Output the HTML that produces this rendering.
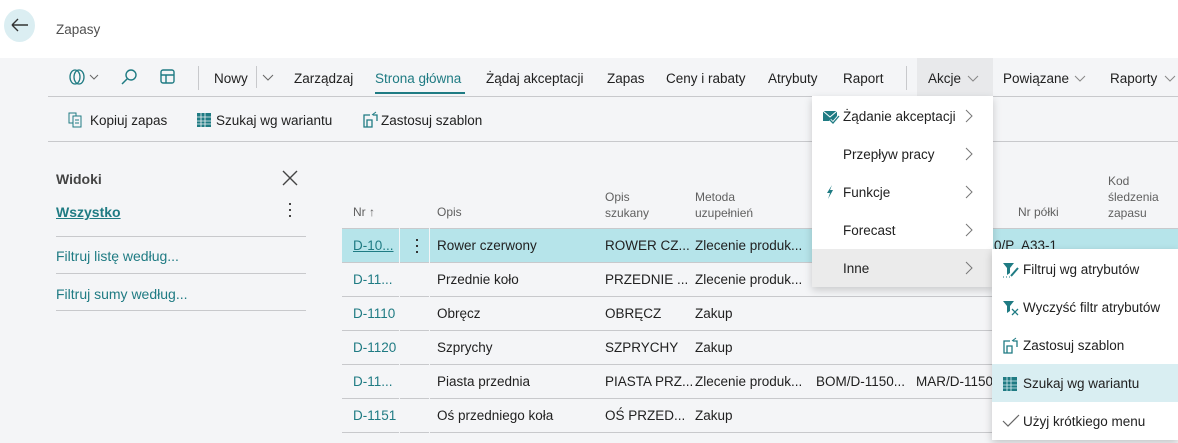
<!DOCTYPE html>
<html><head><meta charset="utf-8"><style>
*{margin:0;padding:0;box-sizing:border-box}
body{width:1178px;height:443px;overflow:hidden;background:#f4f5f7;font-family:"Liberation Sans",sans-serif;font-size:13.5px;color:#212121;position:relative}
.a{position:absolute;white-space:nowrap}
.hl{position:absolute;height:1px;background:#c8c9cc}
.teal{color:#1f7b83}
.g{color:#606060;font-size:12px}
svg{position:absolute}
.t{margin-top:1px}
</style></head><body>
<div class="a" style="left:0;top:0;width:1178px;height:58px;background:#fff"></div>
<div class="a" style="left:4px;top:9px;width:31px;height:33px;border-radius:50%;background:#dbeef2"></div>
<svg style="left:10px;top:17px" width="20" height="16" viewBox="0 0 20 16"><path d="M2 8H18M2 8L8 2M2 8L8 14" stroke="#333" stroke-width="1.4" fill="none"/></svg>
<div class="a" style="left:56px;top:22px;color:#505050">Zapasy</div>

<!-- toolbar -->
<svg style="left:68px;top:68px" width="36" height="18" viewBox="0 0 36 18"><ellipse cx="7" cy="9" rx="5" ry="7" fill="none" stroke="#1f7b83" stroke-width="1.3"/><ellipse cx="11" cy="9" rx="5" ry="7" fill="none" stroke="#1f7b83" stroke-width="1.3"/><path d="M22 7L26 11L30 7" stroke="#666" fill="none"/></svg>
<svg style="left:120px;top:68px" width="18" height="18"><circle cx="11" cy="7" r="5" fill="none" stroke="#1f7b83" stroke-width="1.4"/><path d="M7 11L2 16" stroke="#1f7b83" stroke-width="1.5"/></svg>
<svg style="left:160px;top:68px" width="16" height="18"><rect x="1" y="2" width="13" height="13" rx="2" fill="none" stroke="#1f7b83" stroke-width="1.4"/><path d="M1 7H14M6 7V15" stroke="#1f7b83" stroke-width="1.4"/></svg>
<div class="a" style="left:198px;top:66px;width:1px;height:24px;background:#c8c9cc"></div>
<div class="a" style="left:214px;top:71px">Nowy</div>
<div class="a" style="left:256px;top:66px;width:1px;height:22px;background:#c8c9cc"></div>
<svg style="left:261px;top:73px" width="14" height="10"><path d="M2 2L7 7L12 2" stroke="#666" fill="none"/></svg>
<div class="a" style="left:294px;top:71px">Zarządzaj</div>
<div class="a teal" style="left:375px;top:71px">Strona główna</div>
<div class="a" style="left:375px;top:92px;width:90px;height:2px;background:#1f7b83"></div>
<div class="a" style="left:486px;top:71px">Żądaj akceptacji</div>
<div class="a" style="left:607px;top:71px">Zapas</div>
<div class="a" style="left:666px;top:71px">Ceny i rabaty</div>
<div class="a" style="left:768px;top:71px">Atrybuty</div>
<div class="a" style="left:843px;top:71px">Raport</div>
<div class="a" style="left:906px;top:66px;width:1px;height:24px;background:#c8c9cc"></div>
<div class="a" style="left:917px;top:58px;width:76px;height:38px;background:#e8e9eb"></div>
<div class="a" style="left:928px;top:71px">Akcje</div>
<svg style="left:966px;top:74px" width="14" height="10"><path d="M2 2L7 7L12 2" stroke="#888" fill="none"/></svg>
<div class="a" style="left:1003px;top:71px">Powiązane</div>
<svg style="left:1073px;top:74px" width="14" height="10"><path d="M2 2L7 7L12 2" stroke="#888" fill="none"/></svg>
<div class="a" style="left:1110px;top:71px">Raporty</div>
<svg style="left:1163px;top:74px" width="14" height="10"><path d="M2 2L7 7L12 2" stroke="#888" fill="none"/></svg>
<div class="hl" style="left:48px;top:96px;width:1130px"></div>

<svg style="left:68px;top:112px" width="16" height="16"><rect x="1" y="1" width="7" height="10" fill="none" stroke="#1f7b83"/><rect x="5" y="4" width="8" height="11" fill="#f4f5f7" stroke="#1f7b83"/><path d="M7 8H11M7 11H11" stroke="#1f7b83"/></svg>
<div class="a" style="left:90px;top:113px">Kopiuj zapas</div>
<svg style="left:196px;top:112px" width="16" height="16"><rect x="1" y="1" width="14" height="14" fill="#1f7b83"/><path d="M1 5H15M1 9H15M1 12H15M5 1V15M9 1V15" stroke="#f4f5f7" stroke-width=".8"/></svg>
<div class="a" style="left:216px;top:113px">Szukaj wg wariantu</div>
<svg style="left:362px;top:111px" width="16" height="18"><path d="M8 4H2V16H5M5 16V9H10V16H5M11 4H15V10" stroke="#1f7b83" fill="none" stroke-width="1.3"/><path d="M10 4L14 1" stroke="#1f7b83"/></svg>
<div class="a" style="left:381px;top:113px">Zastosuj szablon</div>
<div class="hl" style="left:48px;top:141px;width:1130px"></div>

<!-- left pane -->
<div class="a" style="left:56px;top:171px;font-weight:bold;color:#444;font-size:14px">Widoki</div>
<svg style="left:281px;top:169px" width="18" height="18"><path d="M2 2L16 16M16 2L2 16" stroke="#444" stroke-width="1.4"/></svg>
<div class="a teal" style="left:56px;top:204px;font-weight:bold;text-decoration:underline;font-size:14px">Wszystko</div>
<div class="a" style="left:289px;top:203px;width:2px;height:2px;background:#444;box-shadow:0 6px #444,0 12px #444"></div>
<div class="hl" style="left:56px;top:236px;width:250px"></div>
<div class="a teal" style="left:56px;top:248px;font-size:14px">Filtruj listę według...</div>
<div class="hl" style="left:56px;top:273px;width:250px"></div>
<div class="a teal" style="left:56px;top:286px;font-size:14px">Filtruj sumy według...</div>
<div class="hl" style="left:56px;top:310px;width:250px"></div>

<!-- grid -->
<div class="a g" style="left:353px;top:205px">Nr ↑</div>
<div class="a g" style="left:437px;top:205px">Opis</div>
<div class="a g" style="left:605px;top:189px;line-height:16px">Opis<br>szukany</div>
<div class="a g" style="left:695px;top:189px;line-height:16px">Metoda<br>uzupełnień</div>
<div class="a g" style="left:1018px;top:205px">Nr półki</div>
<div class="a g" style="left:1108px;top:173px;line-height:16px">Kod<br>śledzenia<br>zapasu</div>
<div class="a" style="left:342px;top:228px;width:836px;height:34px;background:#b6e4ea"></div>
<div class="a" style="left:342px;top:228px;width:836px;height:1px;background:#c8c9cc"></div>
<div class="hl" style="left:342px;top:262px;width:836px"></div>
<div class="hl" style="left:342px;top:296px;width:836px"></div>
<div class="hl" style="left:342px;top:330px;width:836px"></div>
<div class="hl" style="left:342px;top:364px;width:836px"></div>
<div class="hl" style="left:342px;top:398px;width:836px"></div>
<div class="hl" style="left:342px;top:432px;width:836px"></div>
<div class="a" style="left:399px;top:228px;width:1px;height:205px;background:#f4f5f7"></div>
<div class="a" style="left:429px;top:228px;width:1px;height:205px;background:#f4f5f7"></div>
<div class="a" style="left:416px;top:239px;width:2px;height:2px;background:#333;box-shadow:0 6px #333,0 12px #333"></div>

<div class="a teal" style="left:353px;top:238px;text-decoration:underline">D-10...</div>
<div class="a" style="left:437px;top:238px">Rower czerwony</div>
<div class="a" style="left:605px;top:238px">ROWER CZ...</div>
<div class="a" style="left:695px;top:238px">Zlecenie produk...</div>
<div class="a" style="left:994px;top:238px">0/P&nbsp; A33-1</div>

<div class="a teal" style="left:353px;top:272px">D-11...</div>
<div class="a" style="left:437px;top:272px">Przednie koło</div>
<div class="a" style="left:605px;top:272px">PRZEDNIE ...</div>
<div class="a" style="left:695px;top:272px">Zlecenie produk...</div>

<div class="a teal" style="left:353px;top:306px">D-1110</div>
<div class="a" style="left:437px;top:306px">Obręcz</div>
<div class="a" style="left:605px;top:306px">OBRĘCZ</div>
<div class="a" style="left:695px;top:306px">Zakup</div>

<div class="a teal" style="left:353px;top:340px">D-1120</div>
<div class="a" style="left:437px;top:340px">Szprychy</div>
<div class="a" style="left:605px;top:340px">SZPRYCHY</div>
<div class="a" style="left:695px;top:340px">Zakup</div>

<div class="a teal" style="left:353px;top:374px">D-11...</div>
<div class="a" style="left:437px;top:374px">Piasta przednia</div>
<div class="a" style="left:605px;top:374px">PIASTA PRZ...</div>
<div class="a" style="left:695px;top:374px">Zlecenie produk...</div>
<div class="a" style="left:816px;top:374px">BOM/D-1150...</div>
<div class="a" style="left:916px;top:374px;width:76px;overflow:hidden">MAR/D-1150</div>

<div class="a teal" style="left:353px;top:408px">D-1151</div>
<div class="a" style="left:437px;top:408px">Oś przedniego koła</div>
<div class="a" style="left:605px;top:408px">OŚ PRZED...</div>
<div class="a" style="left:695px;top:408px">Zakup</div>

<!-- Akcje dropdown -->
<div class="a" style="left:812px;top:96px;width:181px;height:191px;background:#fff;box-shadow:0 3px 8px rgba(0,0,0,.18)"></div>
<div class="a" style="left:812px;top:249px;width:181px;height:38px;background:#ebebeb"></div>
<svg style="left:822px;top:109px" width="18" height="16"><path d="M1 2H15V12H1Z" fill="#1f7b83"/><path d="M1 2L8 8L15 2" stroke="#fff" fill="none"/><path d="M8 11L11 14L17 7" stroke="#fff" stroke-width="3" fill="none"/><path d="M8 11L11 14L17 7" stroke="#1f7b83" stroke-width="1.3" fill="none"/></svg>
<div class="a" style="left:843px;top:109px">Żądanie akceptacji</div>
<div class="a" style="left:843px;top:147px">Przepływ pracy</div>
<svg style="left:826px;top:185px" width="8" height="14"><path d="M6 0L1 8H4L2 14L7 5H4Z" fill="#1f7b83"/></svg>
<div class="a" style="left:843px;top:185px">Funkcje</div>
<div class="a" style="left:843px;top:223px">Forecast</div>
<div class="a" style="left:843px;top:261px">Inne</div>
<svg style="left:964px;top:108px" width="10" height="16"><path d="M2 2L8 8L2 14" stroke="#777" fill="none"/></svg>
<svg style="left:964px;top:146px" width="10" height="16"><path d="M2 2L8 8L2 14" stroke="#777" fill="none"/></svg>
<svg style="left:964px;top:184px" width="10" height="16"><path d="M2 2L8 8L2 14" stroke="#777" fill="none"/></svg>
<svg style="left:964px;top:222px" width="10" height="16"><path d="M2 2L8 8L2 14" stroke="#777" fill="none"/></svg>
<svg style="left:964px;top:260px" width="10" height="16"><path d="M2 2L8 8L2 14" stroke="#777" fill="none"/></svg>

<!-- submenu -->
<div class="a" style="left:992px;top:249px;width:186px;height:191px;background:#fff;box-shadow:0 3px 8px rgba(0,0,0,.2)"></div>
<div class="a" style="left:992px;top:364px;width:186px;height:38px;background:#d9eef2"></div>
<svg style="left:1002px;top:262px" width="18" height="16"><path d="M1 1H12L8 6V11L5 13V6Z" fill="#1f7b83"/><path d="M9 14L16 6" stroke="#1f7b83" stroke-width="2"/><path d="M1 15H8" stroke="#1f7b83" stroke-dasharray="1 2"/></svg>
<div class="a" style="left:1023px;top:262px">Filtruj wg atrybutów</div>
<svg style="left:1002px;top:300px" width="18" height="16"><path d="M1 1H12L8 6V11L5 13V6Z" fill="#1f7b83"/><path d="M10 9L16 15M16 9L10 15" stroke="#1f7b83" stroke-width="1.3"/></svg>
<div class="a" style="left:1023px;top:300px">Wyczyść filtr atrybutów</div>
<svg style="left:1002px;top:337px" width="16" height="18"><path d="M8 4H2V16H5M5 16V9H10V16H5M11 4H15V10" stroke="#1f7b83" fill="none" stroke-width="1.3"/><path d="M10 4L14 1" stroke="#1f7b83"/></svg>
<div class="a" style="left:1023px;top:338px">Zastosuj szablon</div>
<svg style="left:1002px;top:376px" width="16" height="16"><rect x="1" y="1" width="14" height="14" fill="#1f7b83"/><path d="M1 5H15M1 9H15M1 12H15M5 1V15M9 1V15" stroke="#d9eef2" stroke-width=".8"/></svg>
<div class="a" style="left:1023px;top:376px">Szukaj wg wariantu</div>
<svg style="left:1002px;top:414px" width="18" height="14"><path d="M1 7L6 12L17 1" stroke="#666" fill="none" stroke-width="1.2"/></svg>
<div class="a" style="left:1023px;top:414px">Użyj krótkiego menu</div>
</body></html>
